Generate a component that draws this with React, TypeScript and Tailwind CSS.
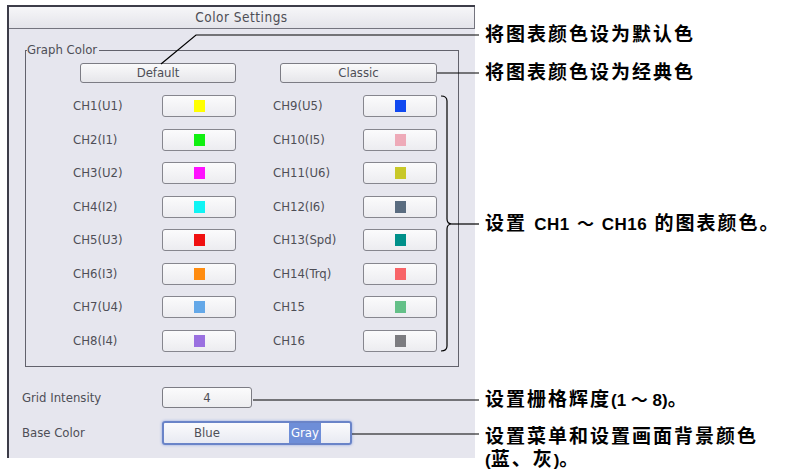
const dlgFont = {
  fontFamily: '"Liberation Sans Narrow", "DejaVu Sans Condensed", sans-serif',
};
const noteFont = {
  fontFamily: '"Liberation Sans", "Noto Sans CJK SC", sans-serif',
};

type Ch = { label: string; color: string };

const left: Ch[] = [
  { label: "CH1(U1)", color: "#ffff00" },
  { label: "CH2(I1)", color: "#10f010" },
  { label: "CH3(U2)", color: "#ff10ff" },
  { label: "CH4(I2)", color: "#10f4f4" },
  { label: "CH5(U3)", color: "#f01010" },
  { label: "CH6(I3)", color: "#ff8c10" },
  { label: "CH7(U4)", color: "#64a8e8" },
  { label: "CH8(I4)", color: "#9a70e0" },
];
const right: Ch[] = [
  { label: "CH9(U5)", color: "#1048f0" },
  { label: "CH10(I5)", color: "#eeaab8" },
  { label: "CH11(U6)", color: "#c8c828" },
  { label: "CH12(I6)", color: "#5a6c80" },
  { label: "CH13(Spd)", color: "#00908a" },
  { label: "CH14(Trq)", color: "#f86468" },
  { label: "CH15", color: "#64c088" },
  { label: "CH16", color: "#7c7c80" },
];

function Swatch({ color }: { color: string }) {
  return (
    <div className="flex h-[22px] w-[74px] items-center justify-center rounded-[3px] border border-[#86868e] bg-gradient-to-b from-[#fbfbfc] to-[#ececf0]">
      <div className="h-[12px] w-[11px]" style={{ background: color }} />
    </div>
  );
}

function Note({ top, children }: { top: number; children: React.ReactNode }) {
  return (
    <div
      className="absolute left-[485px] whitespace-nowrap text-[19px] font-bold leading-[23px] tracking-[2px] text-black"
      style={{ ...noteFont, top }}
    >
      {children}
    </div>
  );
}

const L = ({ children }: { children: React.ReactNode }) => (
  <span className="text-[17px] tracking-normal">{children}</span>
);

export default function App() {
  return (
    <div className="relative h-[470px] w-[785px] overflow-hidden bg-white">
      <div className="pl-[7px] pt-[5px]">
        <div
          className="h-[453px] w-[468px] border-l-2 border-t-2 border-[#3c3c48] bg-[#e6e6ee] text-[13px] text-[#4e4e56]"
          style={dlgFont}
        >
          <div className="flex h-[22px] items-center justify-center border-b border-r border-[#74747e] bg-gradient-to-b from-[#f6f6f8] to-[#e4e4ea] text-[13.5px] tracking-[0.5px]">
            Color Settings
          </div>

          <div className="ml-[16px] mt-[21px] h-[317px] w-[434px] border border-[#62626c]">
            <div className="-mt-[9px] ml-[1px] flex">
              <span className="bg-[#e6e6ee] pr-[2px] leading-[16px]">Graph Color</span>
            </div>
            <div className="mt-[5px] flex">
              <div className="ml-[54px] flex h-[20px] w-[156px] items-center justify-center rounded-[3px] border border-[#7c7c84] bg-gradient-to-b from-[#fafafb] to-[#e6e6ea]">
                Default
              </div>
              <div className="ml-[44px] flex h-[20px] w-[157px] items-center justify-center rounded-[3px] border border-[#7c7c84] bg-gradient-to-b from-[#fafafb] to-[#e6e6ea]">
                Classic
              </div>
            </div>
            <div className="ml-[47px] mt-[12px] grid grid-cols-[89px_74px_37px_90px_74px] gap-y-[11.5px]">
              {left.map((c, i) => (
                <div key={c.label} className="contents">
                  <div className="flex items-center">{c.label}</div>
                  <Swatch color={c.color} />
                  <div />
                  <div className="flex items-center">{right[i].label}</div>
                  <Swatch color={right[i].color} />
                </div>
              ))}
            </div>
          </div>

          <div className="ml-[13px] mt-[20px] flex items-center">
            <div className="w-[140px]">Grid Intensity</div>
            <div className="flex h-[21px] w-[90px] items-center justify-center rounded-[3px] border border-[#7c7c84] bg-gradient-to-b from-[#fbfbfc] to-[#ededf0]">
              4
            </div>
          </div>
          <div className="ml-[13px] mt-[13px] flex items-center">
            <div className="w-[140px]">Base Color</div>
            <div className="flex h-[24px] w-[190px] items-center rounded-[3px] border-2 border-[#6a84c8] bg-gradient-to-b from-[#fbfbfd] to-[#e8eaf2] shadow-[0_0_3px_#8ea4e0]">
              <span className="ml-[30px] w-[95px]">Blue</span>
              <span className="bg-[#6e8ed8] px-[2px] text-white">Gray</span>
            </div>
          </div>
        </div>
      </div>

      <svg className="pointer-events-none absolute left-0 top-0" width="785" height="470">
        <g fill="none" stroke="#000" strokeWidth="1.2">
          <polyline points="161,64 196,35 479,35" />
          <line x1="437" y1="73" x2="479" y2="73" />
          <path d="M441 96 Q447 96 447 101 L447 219 Q447 224 452 224 Q447 224 447 229 L447 346 Q447 351 441 351" />
          <line x1="452" y1="224" x2="479" y2="224" />
          <line x1="253" y1="400" x2="479" y2="400" />
          <line x1="352" y1="434" x2="479" y2="434" />
        </g>
      </svg>

      <Note top={23}>将图表颜色设为默认色</Note>
      <Note top={61}>将图表颜色设为经典色</Note>
      <Note top={212}>
        设置
        <span className="text-[17px] tracking-[0.5px] [word-spacing:2px]"> CH1 ～ CH16 </span>
        的图表颜色。
      </Note>
      <Note top={388}>
        设置栅格辉度<L>(1 ～ 8)</L>。
      </Note>
      <Note top={425}>
        设置菜单和设置画面背景颜色
        <br />
        <L>(</L>蓝、灰<L>)</L>。
      </Note>
    </div>
  );
}
